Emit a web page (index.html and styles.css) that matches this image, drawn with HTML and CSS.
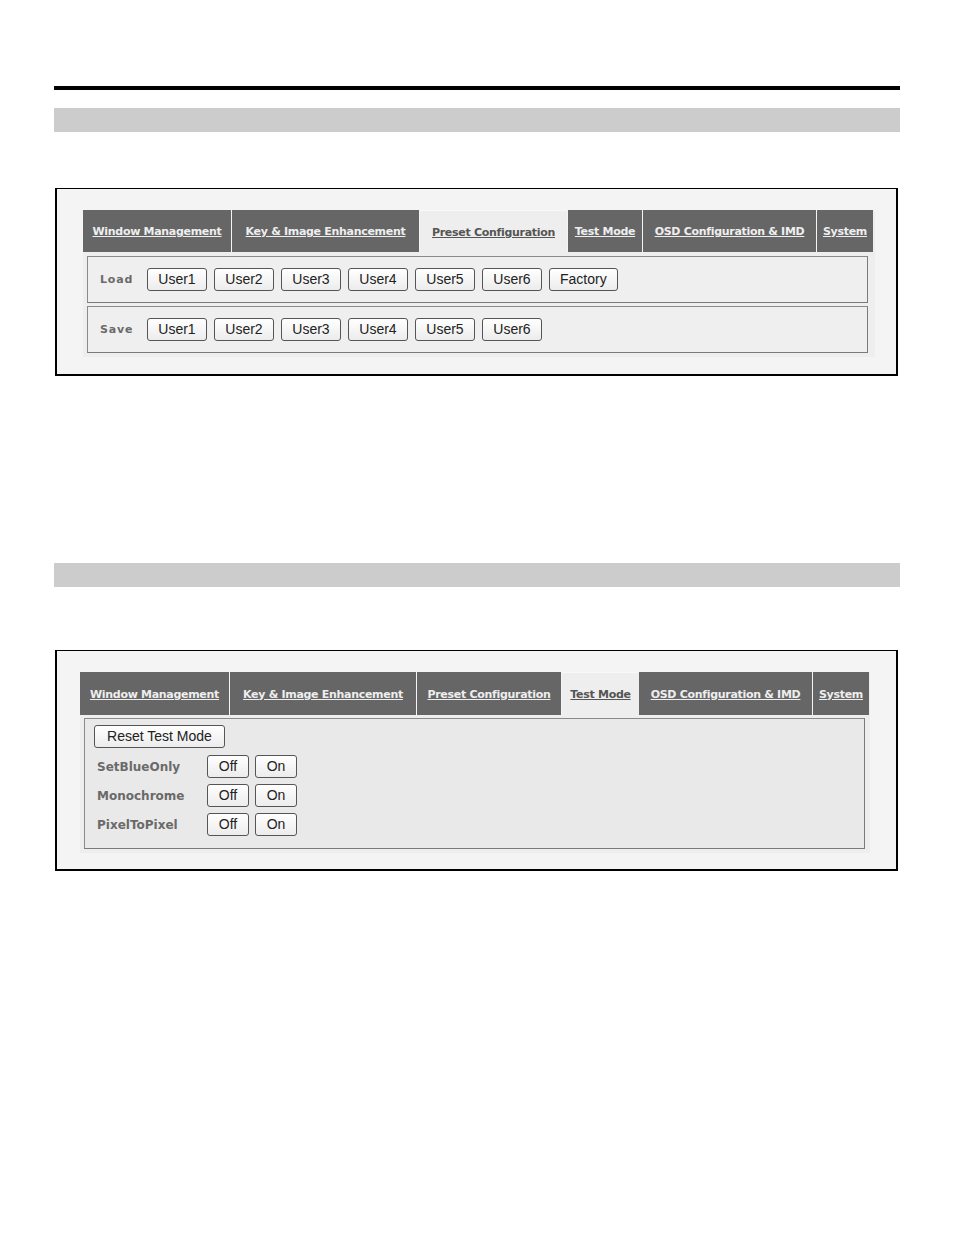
FILE: index.html
```html
<!DOCTYPE html>
<html>
<head>
<meta charset="utf-8">
<link rel="stylesheet" href="styles.css">
</head>
<body>
<div class="page">
  <div class="rule"></div>
  <div class="band band-first"></div>

  <div class="box box-first">
    <div class="tabwrap tabwrap-a">
      <div class="tabs">
        <a class="tab w-wm1">Window Management</a>
        <a class="tab w-key1">Key &amp; Image Enhancement</a>
        <a class="tab active w-pre1">Preset Configuration</a>
        <a class="tab w-tm1">Test Mode</a>
        <a class="tab w-osd1">OSD Configuration &amp; IMD</a>
        <a class="tab w-sys1">System</a>
      </div>
      <div class="panel row-panel">
        <span class="rlabel">Load</span>
        <div class="btns">
          <button class="btn">User1</button>
          <button class="btn">User2</button>
          <button class="btn">User3</button>
          <button class="btn">User4</button>
          <button class="btn">User5</button>
          <button class="btn">User6</button>
          <button class="btn">Factory</button>
        </div>
      </div>
      <div class="panel row-panel">
        <span class="rlabel">Save</span>
        <div class="btns">
          <button class="btn">User1</button>
          <button class="btn">User2</button>
          <button class="btn">User3</button>
          <button class="btn">User4</button>
          <button class="btn">User5</button>
          <button class="btn">User6</button>
        </div>
      </div>
    </div>
  </div>

  <div class="band band-second"></div>

  <div class="box box-second">
    <div class="tabwrap tabwrap-b">
      <div class="tabs tabs-b">
        <a class="tab w-wm2">Window Management</a>
        <a class="tab w-key2">Key &amp; Image Enhancement</a>
        <a class="tab w-pre2">Preset Configuration</a>
        <a class="tab active w-tm2">Test Mode</a>
        <a class="tab w-osd2">OSD Configuration &amp; IMD</a>
        <a class="tab w-sys2">System</a>
      </div>
      <div class="panel test-panel">
        <button class="btn btn-reset">Reset Test Mode</button>
        <div class="trow">
          <span class="tlabel">SetBlueOnly</span>
          <button class="btn btn-sm">Off</button>
          <button class="btn btn-sm">On</button>
        </div>
        <div class="trow">
          <span class="tlabel">Monochrome</span>
          <button class="btn btn-sm">Off</button>
          <button class="btn btn-sm">On</button>
        </div>
        <div class="trow">
          <span class="tlabel">PixelToPixel</span>
          <button class="btn btn-sm">Off</button>
          <button class="btn btn-sm">On</button>
        </div>
      </div>
    </div>
  </div>
</div>
</body>
</html>
```

FILE: styles.css
```css
html, body {
  margin: 0;
  padding: 0;
  background: #ffffff;
}

.page {
  width: 846px;
  margin-left: 54px;
  padding-top: 86px;
  font-family: "DejaVu Sans", Verdana, sans-serif;
}

.rule {
  height: 4px;
  background: #000000;
}

.band {
  height: 24px;
  background: #cccccc;
}

.band-first {
  margin-top: 18px;
}

.band-second {
  margin-top: 187px;
}

.box {
  margin-left: 1px;
  width: 843px;
  box-sizing: border-box;
  border: 2px solid #000000;
  border-top-width: 1px;
  background: #f4f4f4;
}

.box-first {
  margin-top: 56px;
  height: 188px;
  padding: 21px 0 0 26px;
}

.box-second {
  margin-top: 63px;
  height: 221px;
  padding: 21px 0 0 23px;
}

.tabwrap {
  box-sizing: border-box;
  background: #eeeeee;
  padding: 0 7px 4px 0;
}

.tabwrap-a {
  width: 792px;
}

.tabwrap-b {
  width: 790px;
  padding-right: 5px;
}

.tabs {
  display: flex;
  height: 42px;
  gap: 1px;
  background: #f4f4f4;
  width: max-content;
}

.tabs-b {
  height: 43px;
}

.tab {
  display: flex;
  align-items: center;
  justify-content: center;
  box-sizing: border-box;
  background: #666666;
  color: #eeeeee;
  font-size: 11px;
  font-weight: bold;
  text-decoration: underline;
  white-space: nowrap;
  letter-spacing: -0.3px;
  padding-top: 1px;
}

.tab.active {
  background: #eeeeee;
  color: #555555;
  border-top: 1px solid #f8f8f8;
}

.w-wm1 { width: 148px; }
.w-key1 { width: 187px; }
.w-pre1 { width: 147px; }
.w-tm1 { width: 74px; }
.w-osd1 { width: 173px; }
.w-sys1 { width: 56px; }

.w-wm2 { width: 149px; }
.w-key2 { width: 186px; }
.w-pre2 { width: 144px; }
.w-tm2 { width: 77px; margin-right: -1px; }
.w-osd2 { width: 173px; }
.w-sys2 { width: 56px; }

.panel {
  box-sizing: border-box;
  border: 1px solid #8a8a8a;
  border-right-color: #7a7a7a;
  border-bottom-color: #7a7a7a;
  background: #efefef;
  margin-left: 4px;
}

.row-panel {
  height: 47px;
  display: flex;
  align-items: center;
  padding-left: 12px;
  margin-top: 4px;
}

.row-panel + .row-panel {
  margin-top: 3px;
}

.rlabel {
  width: 47px;
  font-size: 11px;
  font-weight: bold;
  color: #6a6a6a;
  letter-spacing: 0.8px;
}

.btns {
  display: flex;
  gap: 7px;
}

.btn {
  box-sizing: border-box;
  height: 23px;
  min-width: 60px;
  padding: 0 10px;
  border: 1px solid #555555;
  border-radius: 3px;
  background: linear-gradient(#ffffff, #ececec);
  font-family: "Liberation Sans", Arial, sans-serif;
  font-size: 14px;
  color: #222222;
  line-height: 21px;
}

.test-panel {
  background: #e9e9e9;
  height: 131px;
  margin-top: 3px;
  padding: 6px 0 0 9px;
}

.btn-reset {
  width: 131px;
  height: 23px;
  padding: 0;
}

.trow {
  display: flex;
  align-items: center;
  gap: 6px;
  margin-top: 7px;
  height: 23px;
}

.trow + .trow {
  margin-top: 6px;
}

.tlabel {
  width: 104px;
  padding-left: 3px;
  font-size: 12px;
  font-weight: bold;
  color: #6a6a6a;
}

.btn-sm {
  min-width: 0;
  width: 42px;
  padding: 0;
}
```
